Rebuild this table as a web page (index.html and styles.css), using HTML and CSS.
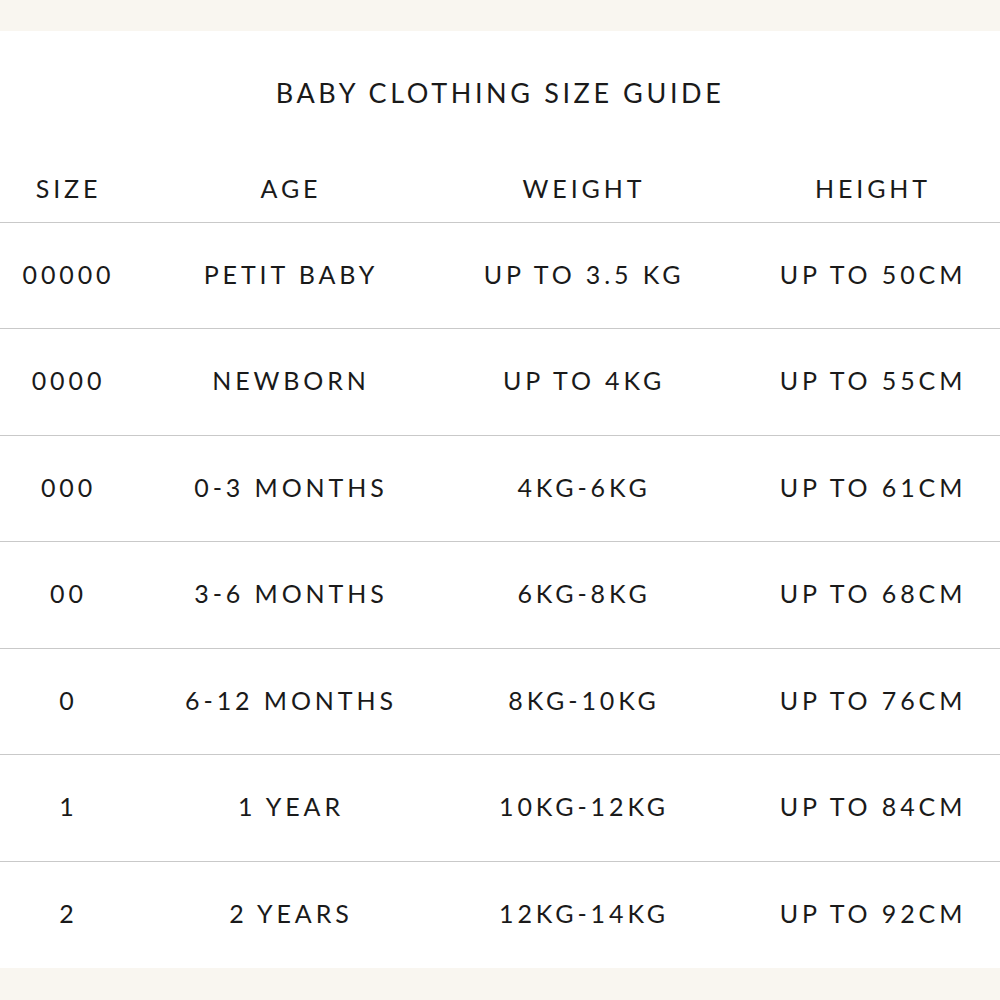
FILE: index.html
```html
<!DOCTYPE html>
<html>
<head>
<meta charset="utf-8">
<link rel="stylesheet" href="styles.css">
</head>
<body>
<div class="page">
  <div class="band"></div>
  <main class="card">
    <h1 class="title">BABY CLOTHING SIZE GUIDE</h1>
    <div class="table">
      <div class="row head">
        <div class="cell c1">SIZE</div><div class="cell c2">AGE</div><div class="cell c3">WEIGHT</div><div class="cell c4">HEIGHT</div>
      </div>
      <div class="row">
        <div class="cell c1">00000</div><div class="cell c2">PETIT BABY</div><div class="cell c3">UP TO 3.5 KG</div><div class="cell c4">UP TO 50CM</div>
      </div>
      <div class="row">
        <div class="cell c1">0000</div><div class="cell c2">NEWBORN</div><div class="cell c3">UP TO 4KG</div><div class="cell c4">UP TO 55CM</div>
      </div>
      <div class="row">
        <div class="cell c1">000</div><div class="cell c2">0-3 MONTHS</div><div class="cell c3">4KG-6KG</div><div class="cell c4">UP TO 61CM</div>
      </div>
      <div class="row">
        <div class="cell c1">00</div><div class="cell c2">3-6 MONTHS</div><div class="cell c3">6KG-8KG</div><div class="cell c4">UP TO 68CM</div>
      </div>
      <div class="row">
        <div class="cell c1">0</div><div class="cell c2">6-12 MONTHS</div><div class="cell c3">8KG-10KG</div><div class="cell c4">UP TO 76CM</div>
      </div>
      <div class="row">
        <div class="cell c1">1</div><div class="cell c2">1 YEAR</div><div class="cell c3">10KG-12KG</div><div class="cell c4">UP TO 84CM</div>
      </div>
      <div class="row last">
        <div class="cell c1">2</div><div class="cell c2">2 YEARS</div><div class="cell c3">12KG-14KG</div><div class="cell c4">UP TO 92CM</div>
      </div>
    </div>
  </main>
  <div class="band bottom"></div>
</div>
</body>
</html>
```

FILE: styles.css
```css
html, body {
  margin: 0;
  padding: 0;
  background: #f9f6f0;
}
.page {
  width: 1000px;
  height: 1000px;
  display: flex;
  flex-direction: column;
  font-family: "Lato", "DejaVu Sans", sans-serif;
  color: #1a1a1a;
}
.band {
  height: 31px;
  background: #f9f6f0;
}
.band.bottom {
  flex: 1;
}
.card {
  background: #ffffff;
  height: 937px;
  display: flex;
  flex-direction: column;
}
.title {
  margin: 0;
  height: 126px;
  display: flex;
  align-items: center;
  justify-content: center;
  font-size: 27px;
  font-weight: 400;
  letter-spacing: 3.6px;
  padding-bottom: 2px;
  box-sizing: border-box;
}
.table {
  display: flex;
  flex-direction: column;
}
.row {
  display: grid;
  grid-template-columns: 134px 314px 272px 280px;
  height: 106.5px;
  align-items: center;
  border-bottom: 1.5px solid #c9c9c9;
  box-sizing: border-box;
  padding-bottom: 3px;
  font-size: 25px;
  letter-spacing: 3.9px;
}
.row.head {
  height: 66px;
}
.row.last {
  border-bottom: none;
}
.cell {
  text-align: center;
  white-space: nowrap;
}
.c1 {
  padding-left: 3px;
}
.c4 {
  padding-left: 26px;
}
```
